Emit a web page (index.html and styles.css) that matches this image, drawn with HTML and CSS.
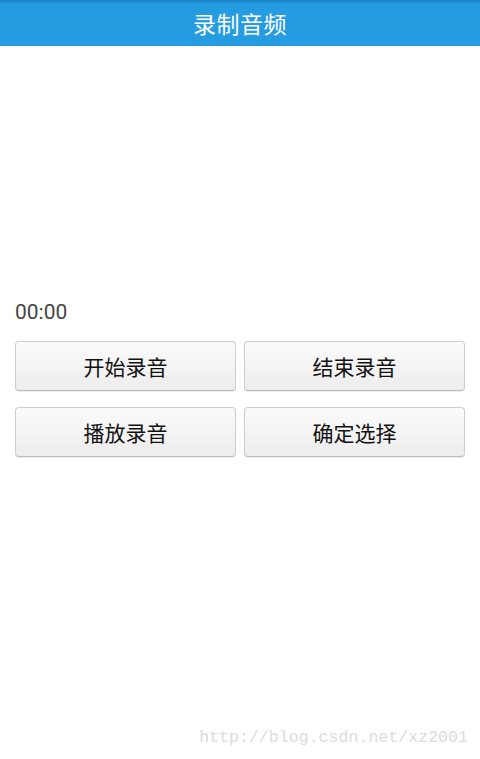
FILE: index.html
```html
<!DOCTYPE html>
<html lang="zh">
<head>
<meta charset="utf-8">
<title>录制音频</title>
<link rel="stylesheet" href="styles.css">
</head>
<body>
<header class="titlebar">录制音频</header>
<main class="content">
  <div class="timer">00:00</div>
  <div class="btn-grid">
    <button class="btn">开始录音</button>
    <button class="btn">结束录音</button>
    <button class="btn">播放录音</button>
    <button class="btn">确定选择</button>
  </div>
</main>
<footer class="watermark">http://blog.csdn.net/xz2001</footer>
</body>
</html>
```
FILE: styles.css
```css
html, body {
  margin: 0;
  padding: 0;
  background: #ffffff;
}
body {
  width: 480px;
  height: 759px;
  display: flex;
  flex-direction: column;
  font-family: "Noto Sans CJK SC", "Noto Sans", sans-serif;
  overflow: hidden;
}
.titlebar {
  height: 46px;
  flex: none;
  display: flex;
  align-items: center;
  justify-content: center;
  background: linear-gradient(to bottom, #1a7cbf 0px, #2190d4 2px, #259be2 4px, #259be2 100%);
  color: #ffffff;
  font-size: 23px;
  letter-spacing: 0.5px;
}
.content {
  flex: 1;
  padding: 252px 15px 0 15px;
}
.timer {
  font-family: Roboto, "Noto Sans", sans-serif;
  font-size: 21px;
  line-height: 28px;
  color: #444444;
  height: 28px;
}
.btn-grid {
  margin-top: 15px;
  display: grid;
  grid-template-columns: 1fr 1fr;
  column-gap: 8px;
  row-gap: 16px;
}
.btn {
  height: 50px;
  border: 1px solid #cdcdcd;
  border-bottom-color: #bdbdbd;
  border-radius: 4px;
  background: linear-gradient(to bottom, #fbfbfb 0%, #f4f4f4 50%, #ececec 100%);
  box-shadow: 0 1px 1px rgba(0,0,0,0.08);
  font-family: "Noto Sans CJK SC", sans-serif;
  font-size: 21px;
  color: #111111;
  padding: 0;
}
.watermark {
  flex: none;
  height: 31px;
  padding-top: 3px;
  text-align: right;
  padding-right: 12px;
  font-family: "Liberation Mono", monospace;
  font-size: 16.6px;
  color: #dcdcdc;
  line-height: 20px;
}
```
